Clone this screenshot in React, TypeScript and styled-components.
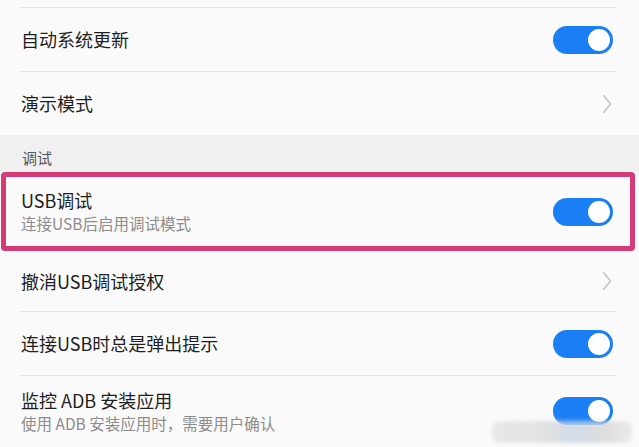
import React from "react";
import styled, { createGlobalStyle } from "styled-components";

const Global = createGlobalStyle`
  html, body { margin: 0; padding: 0; background: #fafafa; }
  * { box-sizing: border-box; }
`;

const Page = styled.div`
  position: relative;
  width: 639px;
  height: 447px;
  overflow: hidden;
  background: #fafafa;
  font-family: "Noto Sans CJK SC", "Noto Sans", sans-serif;
  color: #1e1e1e;
`;

const TopSliver = styled.div`
  height: 7px;
`;

const Divider = styled.div`
  height: 1px;
  margin: 0 22px 0 20px;
  background: #e6e6e6;
`;

const Row = styled.div<{ $h?: number }>`
  height: ${(p) => p.$h ?? 63}px;
  padding: 0 26px 0 21px;
  display: flex;
  align-items: center;
  justify-content: space-between;
`;

const HighlightRow = styled.div`
  height: 79px;
  margin: 0 4px 0 1px;
  border: 5px solid #d63a77;
  border-radius: 4px;
  padding: 0 17px 0 15px;
  display: flex;
  align-items: center;
  justify-content: space-between;
  background: #fafafa;
`;

const SectionHeader = styled.div`
  height: 37px;
  background: #f0f0f0;
  padding: 0 0 3px 22px;
  display: flex;
  align-items: flex-end;
  font-size: 15px;
  line-height: 22px;
  color: #555;
`;

const TextBlock = styled.div`
  display: flex;
  flex-direction: column;
`;

const Title = styled.div`
  font-size: 18px;
  line-height: 23px;
  color: #1e1e1e;
`;

const Subtitle = styled.div`
  font-size: 15.5px;
  line-height: 21px;
  color: #8c8c8c;
  margin-top: 1px;
`;

const Track = styled.div`
  width: 60px;
  height: 28px;
  border-radius: 14px;
  background: #1a7ef5;
  display: flex;
  align-items: center;
  justify-content: flex-end;
  padding-right: 3px;
  flex-shrink: 0;
`;

const Knob = styled.div`
  width: 22px;
  height: 22px;
  border-radius: 50%;
  background: #ffffff;
`;

const Watermark = styled.div`
  position: absolute;
  left: 492px;
  top: 421px;
  width: 140px;
  height: 22px;
  border-radius: 8px;
  background: linear-gradient(90deg, #e4e4e4 0%, #dcdcdc 40%, #c9d6e6 55%, #d6d6d6 80%, #e6e6e6 100%);
  filter: blur(2px);
  opacity: 0.8;
`;

const Toggle = () => (
  <Track>
    <Knob />
  </Track>
);

const Chevron = () => (
  <svg width="10" height="20" viewBox="0 0 10 20" style={{ marginRight: 1 }}>
    <path d="M1.5 1.5 L8.5 10 L1.5 18.5" fill="none" stroke="#c4c4c4" strokeWidth="1.5" strokeLinecap="round" strokeLinejoin="round" />
  </svg>
);

export default function App() {
  return (
    <>
      <Global />
      <Page>
        <TopSliver />
        <Divider />
        <Row>
          <Title>自动系统更新</Title>
          <Toggle />
        </Row>
        <Divider />
        <Row>
          <Title>演示模式</Title>
          <Chevron />
        </Row>
        <SectionHeader>调试</SectionHeader>
        <HighlightRow>
          <TextBlock>
            <Title>USB调试</Title>
            <Subtitle>连接USB后启用调试模式</Subtitle>
          </TextBlock>
          <Toggle />
        </HighlightRow>
        <Row $h={60}>
          <Title>撤消USB调试授权</Title>
          <Chevron />
        </Row>
        <Divider />
        <Row>
          <Title>连接USB时总是弹出提示</Title>
          <Toggle />
        </Row>
        <Divider />
        <Row $h={70}>
          <TextBlock>
            <Title>监控 ADB 安装应用</Title>
            <Subtitle>使用 ADB 安装应用时，需要用户确认</Subtitle>
          </TextBlock>
          <Toggle />
        </Row>
        <Watermark />
      </Page>
    </>
  );
}
